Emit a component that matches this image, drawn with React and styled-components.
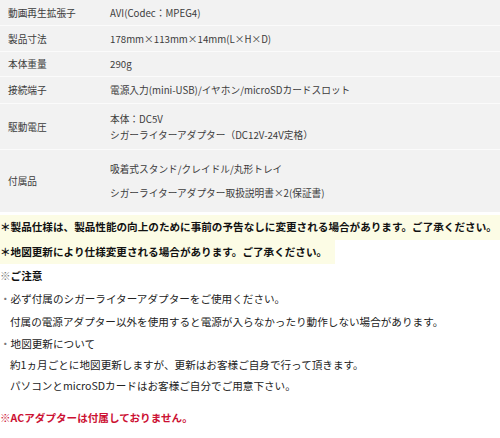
import React from "react";
import styled, { createGlobalStyle } from "styled-components";

const Global = createGlobalStyle`
  html, body { margin: 0; padding: 0; background: #ffffff; }
  body {
    font-family: "Noto Sans CJK JP", "Noto Sans", sans-serif;
    width: 500px;
    overflow: hidden;
  }
`;

const Page = styled.div`
  width: 500px;
  height: 438px;
  overflow: hidden;
`;

const Table = styled.div`
  display: flex;
  flex-direction: column;
  background: #f2f2f2;
  height: 212px;
`;

const Row = styled.div`
  display: grid;
  grid-template-columns: 110px 1fr;
  align-items: center;
  height: ${(p) => p.$h}px;
  border-bottom: ${(p) => (p.$last ? "none" : "1px solid #fbfbfb")};
  box-sizing: border-box;
`;

const Label = styled.div`
  padding-left: 8px;
  font-size: 9.7px;
  color: #3c3c3c;
  white-space: nowrap;
`;

const Value = styled.div`
  display: flex;
  flex-direction: column;
  gap: ${(p) => p.$gap || 0}px;
  font-size: 9.7px;
  color: #3c3c3c;
  white-space: nowrap;
  line-height: ${(p) => p.$lh || 14}px;
`;

const Notes = styled.div`
  display: flex;
  flex-direction: column;
  padding-top: 3px;
  font-size: 10.6px;
  color: #222;
  white-space: nowrap;
`;

const Highlight = styled.div`
  display: flex;
  line-height: 24.5px;
`;

const Mark = styled.span`
  background: #fcfce5;
  font-weight: 700;
  color: #111;
  padding-right: ${(p) => p.$pr || 0}px;
`;

const Line = styled.div`
  line-height: ${(p) => p.$h || 23}px;
  padding-left: ${(p) => (p.$indent ? "10px" : "0")};
  font-weight: ${(p) => (p.$bold ? 700 : 400)};
  color: ${(p) => (p.$bold ? "#111" : "#222")};
`;

const Faint = styled.span`
  color: #777;
  font-weight: 400;
`;

const Red = styled.div`
  margin-top: 9px;
  line-height: 23px;
  color: #cc1133;
  font-weight: 700;
`;

const rows = [
  { label: "動画再生拡張子", h: 26, values: ["AVI(Codec：MPEG4)"] },
  { label: "製品寸法", h: 26, values: ["178mm×113mm×14mm(L×H×D)"] },
  { label: "本体重量", h: 25, values: ["290g"] },
  { label: "接続端子", h: 27, values: ["電源入力(mini-USB)/イヤホン/microSDカードスロット"] },
  { label: "駆動電圧", h: 46, lh: 16, values: ["本体：DC5V", "シガーライターアダプター（DC12V-24V定格）"] },
  { label: "付属品", h: 62, lh: 14, gap: 10, values: ["吸着式スタンド/クレイドル/丸形トレイ", "シガーライターアダプター取扱説明書×2(保証書)"] },
];

export default function App() {
  return (
    <Page>
      <Global />
      <Table>
        {rows.map((r, i) => (
          <Row key={r.label} $h={r.h} $last={i === rows.length - 1}>
            <Label>{r.label}</Label>
            <Value $lh={r.lh} $gap={r.gap}>
              {r.values.map((v) => (
                <span key={v}>{v}</span>
              ))}
            </Value>
          </Row>
        ))}
      </Table>
      <Notes>
        <Highlight>
          <Mark $pr={6}>＊製品仕様は、製品性能の向上のために事前の予告なしに変更される場合があります。ご了承ください。</Mark>
        </Highlight>
        <Highlight>
          <Mark $pr={8}>＊地図更新により仕様変更される場合があります。ご了承ください。</Mark>
        </Highlight>
        <Line $bold><Faint>※</Faint>ご注意</Line>
        <Line><Faint>・</Faint>必ず付属のシガーライターアダプターをご使用ください。</Line>
        <Line $indent>付属の電源アダプター以外を使用すると電源が入らなかったり動作しない場合があります。</Line>
        <Line $h={22}><Faint>・</Faint>地図更新について</Line>
        <Line $indent $h={20}>約1ヵ月ごとに地図更新しますが、更新はお客様ご自身で行って頂きます。</Line>
        <Line $indent $h={22}>パソコンとmicroSDカードはお客様ご自分でご用意下さい。</Line>
        <Red>※ACアダプターは付属しておりません。</Red>
      </Notes>
    </Page>
  );
}
